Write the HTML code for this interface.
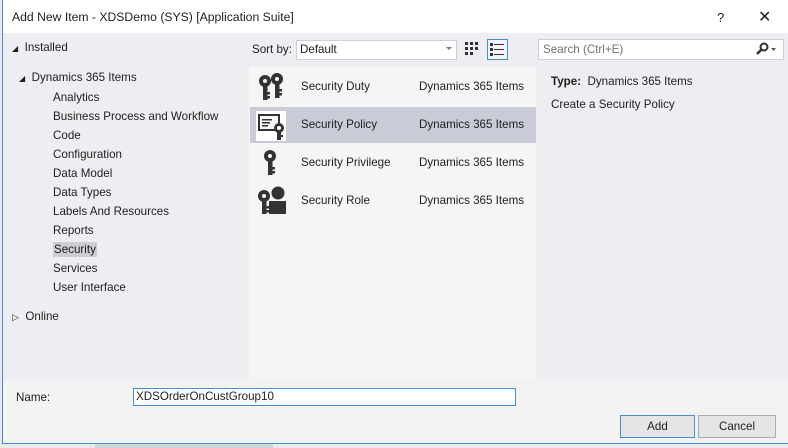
<!DOCTYPE html>
<html><head><style>
body{margin:0;width:788px;height:448px;overflow:hidden;background:#e9e9ee;font-family:"Liberation Sans",sans-serif;font-size:11.6px;color:#1e1e1e;position:relative}
.a{position:absolute}
.win{left:2px;top:0;width:786px;height:443px;background:#eeeef2;border-left:1px solid #3c8fd8;border-bottom:1px solid #3c8fd8}
.t{white-space:nowrap}
</style></head><body>
<div class="a win"></div>
<div class="a" style="left:3px;top:0;width:785px;height:33px;background:#fff"></div>
<div class="a t" style="left:12px;top:10px;font-size:12.2px">Add New Item - XDSDemo (SYS) [Application Suite]</div>
<div class="a t" style="left:717px;top:10px;font-size:13px">?</div>
<div class="a t" style="left:758px;top:7px;font-size:16px">✕</div>

<div class="a t" style="left:12px;top:41px"><span style="font-size:8px">◢</span>&nbsp; Installed</div>
<div class="a t" style="left:19px;top:71px"><span style="font-size:8px">◢</span>&nbsp; Dynamics 365 Items</div>
<div class="a" style="left:53px;top:88px;line-height:19px">Analytics<br>Business Process and Workflow<br>Code<br>Configuration<br>Data Model<br>Data Types<br>Labels And Resources<br>Reports<br><span style="background:#cdcdd5;padding:1px 1px">Security</span><br>Services<br>User Interface</div>
<div class="a t" style="left:12px;top:310px"><span style="font-size:9px">▷</span>&nbsp; Online</div>

<div class="a t" style="left:252px;top:43px">Sort by:</div>
<div class="a" style="left:296px;top:40px;width:159px;height:18px;background:#fff;border:1px solid #ccced8"></div>
<div class="a t" style="left:300px;top:43px">Default</div>
<div class="a" style="left:446px;top:47px;border-left:3px solid transparent;border-right:3px solid transparent;border-top:3px solid #777"></div>
<svg class="a" style="left:465px;top:42px" width="14" height="14"><g fill="#333"><rect x="0" y="0" width="3" height="3"/><rect x="5" y="0" width="3" height="3"/><rect x="10" y="0" width="3" height="3"/><rect x="0" y="5" width="3" height="3"/><rect x="5" y="5" width="3" height="3"/><rect x="10" y="5" width="3" height="3"/><rect x="0" y="10" width="3" height="3"/><rect x="5" y="10" width="3" height="3"/></g></svg>
<div class="a" style="left:487px;top:39px;width:19px;height:19px;border:1px solid #3c8fd8;background:#f4f4f8"></div>
<svg class="a" style="left:490px;top:43px" width="14" height="13"><g fill="#333"><rect x="0" y="0" width="3" height="3"/><rect x="4" y="1" width="10" height="1"/><rect x="0" y="5" width="3" height="3"/><rect x="4" y="6" width="10" height="1"/><rect x="0" y="10" width="3" height="3"/><rect x="4" y="11" width="10" height="1"/></g></svg>

<div class="a" style="left:249px;top:67px;width:287px;height:313px;background:#f5f5f5"></div>
<div class="a" style="left:250px;top:107px;width:286px;height:36px;background:#c9cbd6"></div>
<svg class="a" style="left:258px;top:73px" width="28" height="30" fill="#333"><circle cx="7" cy="8" r="6"/><rect x="5" y="12" width="4.5" height="15"/><rect x="9" y="19" width="3" height="2.5"/><rect x="9" y="23" width="3" height="2.5"/><circle cx="19" cy="6" r="6"/><rect x="17" y="10" width="4.5" height="15"/><rect x="21" y="16" width="3" height="2.5"/><rect x="21" y="20" width="3" height="2.5"/><circle cx="7" cy="8" r="2" fill="#f5f5f5"/><circle cx="19" cy="6" r="2" fill="#f5f5f5"/></svg>
<svg class="a" style="left:256px;top:111px" width="32" height="30"><rect x="0" y="0" width="30" height="30" fill="#fff"/><rect x="2" y="3" width="22" height="17" fill="#333"/><rect x="4" y="5" width="18" height="13" fill="#f5f5f5"/><g fill="#333"><rect x="6" y="8" width="10" height="1.5"/><rect x="6" y="11" width="8" height="1.5"/><rect x="6" y="14" width="6" height="1.5"/></g><circle cx="23" cy="17" r="5" fill="#333"/><circle cx="23" cy="17" r="2" fill="#fff"/><rect x="21" y="21" width="4" height="8" fill="#333"/><rect x="25" y="24" width="2" height="2" fill="#333"/></svg>
<svg class="a" style="left:262px;top:149px" width="18" height="28" fill="#333"><circle cx="8" cy="7" r="6"/><circle cx="8" cy="7" r="2" fill="#f5f5f5"/><rect x="6" y="11" width="4.5" height="15"/><rect x="10" y="18" width="3" height="2.5"/><rect x="10" y="22" width="3" height="2.5"/></svg>
<svg class="a" style="left:257px;top:186px" width="30" height="30" fill="#333"><circle cx="7" cy="10" r="6"/><circle cx="7" cy="10" r="2" fill="#f5f5f5"/><rect x="5" y="14" width="4.5" height="14"/><rect x="9" y="20" width="3" height="2.5"/><rect x="9" y="24" width="3" height="2.5"/><circle cx="21" cy="7" r="6.5"/><path d="M12 15h17v13H12z"/></svg>
<div class="a t" style="left:301px;top:68px;line-height:38px">Security Duty<br>Security Policy<br>Security Privilege<br>Security Role</div>
<div class="a t" style="left:419px;top:68px;line-height:38px">Dynamics 365 Items<br>Dynamics 365 Items<br>Dynamics 365 Items<br>Dynamics 365 Items</div>

<div class="a" style="left:538px;top:39px;width:244px;height:19px;background:#fff;border:1px solid #ccced8"></div>
<div class="a t" style="left:543px;top:43px;color:#717171">Search (Ctrl+E)</div>
<svg class="a" style="left:756px;top:42px" width="26" height="14"><circle cx="8" cy="5" r="3.5" fill="none" stroke="#333" stroke-width="2"/><path d="M5.5 7.5L1 12" stroke="#333" stroke-width="2.5"/><path d="M15 6h5l-2.5 3z" fill="#555"/></svg>
<div class="a t" style="left:551px;top:75px"><b>Type:</b>&nbsp; Dynamics 365 Items</div>
<div class="a t" style="left:551px;top:98px">Create a Security Policy</div>

<div class="a" style="left:3px;top:381px;width:785px;height:62px;background:#f3f3f3"></div>
<div class="a t" style="left:16px;top:391px">Name:</div>
<div class="a" style="left:133px;top:388px;width:381px;height:16px;background:#fff;border:1px solid #3c8fd8"></div>
<div class="a t" style="left:136px;top:390px">XDSOrderOnCustGroup10</div>
<div class="a" style="left:620px;top:415px;width:73px;height:21px;border:1px solid #3c8fd8;background:#e5e5e5;text-align:center;line-height:21px">Add</div>
<div class="a" style="left:698px;top:415px;width:76px;height:21px;border:1px solid #adadad;background:#e5e5e5;text-align:center;line-height:21px">Cancel</div>
<div class="a" style="left:95px;top:444px;width:178px;height:4px;background:#d5d5dc"></div>
</body></html>
